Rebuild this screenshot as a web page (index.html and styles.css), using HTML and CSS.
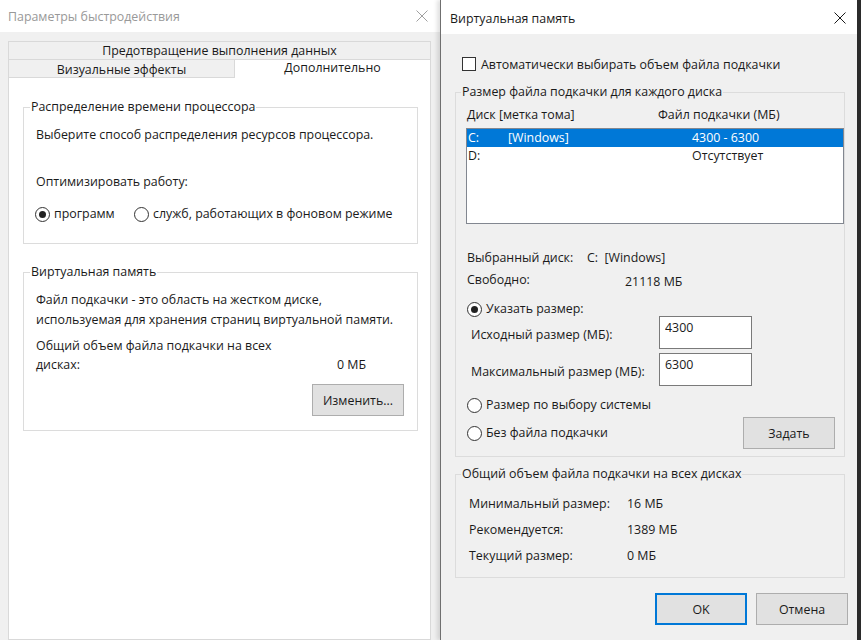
FILE: index.html
```html
<!DOCTYPE html>
<html lang="ru">
<head>
    <meta charset="UTF-8">
    <title>Параметры быстродействия</title>
    <link rel="stylesheet" href="styles.css">
</head>
<body>
    <div class="desk">
        <section class="win perf">
            <div class="titlebar">
                <span>Параметры быстродействия</span>
                <svg class="close" width="12" height="12" viewBox="0 0 12 12"><path d="M0.5 0.5L11.5 11.5M11.5 0.5L0.5 11.5" stroke="#a0a0a0" stroke-width="1"/></svg>
            </div>
            <div class="tabs">
                <div class="tab-row back">Предотвращение выполнения данных</div>
                <div class="tab-row front">
                    <div class="tab">Визуальные эффекты</div>
                    <div class="tab active">Дополнительно</div>
                </div>
            </div>
            <div class="tab-panel">
                <fieldset class="group cpu">
                    <legend>Распределение времени процессора</legend>
                    <p class="line">Выберите способ распределения ресурсов процессора.</p>
                    <p class="line optimize">Оптимизировать работу:</p>
                    <div class="radios">
                        <label class="radio first"><span class="dot on"></span>программ</label>
                        <label class="radio"><span class="dot"></span>служб, работающих в фоновом режиме</label>
                    </div>
                </fieldset>
                <fieldset class="group vmem">
                    <legend>Виртуальная память</legend>
                    <p class="line">Файл подкачки - это область на жестком диске,</p>
                    <p class="line">используемая для хранения страниц виртуальной памяти.</p>
                    <div class="total">
                        <span class="total-label">Общий объем файла подкачки на всех<br>дисках:</span>
                        <span>0 МБ</span>
                    </div>
                    <div class="btn-right">
                        <button class="btn">Изменить...</button>
                    </div>
                </fieldset>
            </div>
        </section>

        <section class="win vm">
            <div class="titlebar">
                <span>Виртуальная память</span>
                <svg class="close" width="12" height="12" viewBox="0 0 12 12"><path d="M0.5 0.5L11.5 11.5M11.5 0.5L0.5 11.5" stroke="#1a1a1a" stroke-width="1"/></svg>
            </div>
            <div class="vm-body">
                <label class="check"><span class="box"></span>Автоматически выбирать объем файла подкачки</label>

                <fieldset class="group disks">
                    <legend>Размер файла подкачки для каждого диска</legend>
                    <div class="list-head">
                        <span>Диск [метка тома]</span>
                        <span>Файл подкачки (МБ)</span>
                    </div>
                    <div class="listbox">
                        <div class="row selected"><span class="c-drive">C:</span><span class="c-label">[Windows]</span><span>4300 - 6300</span></div>
                        <div class="row"><span class="c-drive">D:</span><span class="c-label"></span><span>Отсутствует</span></div>
                    </div>
                    <div class="info sel">
                        <span class="info-label">Выбранный диск:</span>
                        <span>C:&nbsp;&nbsp;[Windows]</span>
                    </div>
                    <div class="info free">
                        <span class="info-label">Свободно:</span>
                        <span class="free-val">21118 МБ</span>
                    </div>
                    <label class="radio custom"><span class="dot on"></span>Указать размер:</label>
                    <div class="field">
                        <span class="field-label">Исходный размер (МБ):</span>
                        <input class="num" type="text" value="4300">
                    </div>
                    <div class="field second">
                        <span class="field-label">Максимальный размер (МБ):</span>
                        <input class="num" type="text" value="6300">
                    </div>
                    <label class="radio system"><span class="dot"></span>Размер по выбору системы</label>
                    <div class="last-row">
                        <label class="radio"><span class="dot"></span>Без файла подкачки</label>
                        <button class="btn">Задать</button>
                    </div>
                </fieldset>

                <fieldset class="group totals">
                    <legend>Общий объем файла подкачки на всех дисках</legend>
                    <div class="stat"><span class="stat-label">Минимальный размер:</span><span>16 МБ</span></div>
                    <div class="stat"><span class="stat-label">Рекомендуется:</span><span>1389 МБ</span></div>
                    <div class="stat"><span class="stat-label">Текущий размер:</span><span>0 МБ</span></div>
                </fieldset>

                <div class="dialog-buttons">
                    <button class="btn default">OK</button>
                    <button class="btn">Отмена</button>
                </div>
            </div>
        </section>
    </div>
</body>
</html>
```

FILE: styles.css
```css
body {
    margin: 0;
    background-color: #2b2b2b;
    font-family: "Open Sans", "Noto Sans", sans-serif;
    font-size: 12.4px;
    color: #1a1a1a;
}

.desk {
    display: flex;
    width: 861px;
    height: 640px;
    overflow: hidden;
    white-space: nowrap;
}

.win {
    display: flex;
    flex-direction: column;
    flex: none;
    height: 640px;
    background-color: #f0f0f0;
    box-sizing: border-box;
}

.perf {
    width: 440px;
}

.vm {
    width: 417px;
    border-left: 1px solid #6f6f6f;
    box-shadow: -3px 0 4px rgba(0, 0, 0, 0.12);
}

.titlebar {
    flex: none;
    height: 32px;
    display: flex;
    align-items: center;
    justify-content: space-between;
    padding: 0 12px 0 8px;
    background-color: #fff;
    color: #999;
}

.vm .titlebar {
    height: 34px;
    padding: 2px 11px 0 9px;
    box-sizing: border-box;
    color: #1a1a1a;
}

.close {
    display: block;
}

/* tabs */

.tabs {
    margin: 9px 0 0 8px;
    width: 423px;
}

.tab-row.back {
    height: 18px;
    box-sizing: border-box;
    border: 1px solid #d9d9d9;
    border-bottom: none;
    display: flex;
    align-items: center;
    justify-content: center;
    line-height: 16px;
}

.tab-row.front {
    display: flex;
    height: 19px;
}

.tab {
    box-sizing: border-box;
    border: 1px solid #d9d9d9;
    display: flex;
    align-items: center;
    justify-content: center;
    line-height: 16px;
}

.tab:first-child {
    width: 226px;
    border-right: none;
    padding-top: 2px;
}

.tab.active {
    flex: 1;
    border-bottom: none;
    background-color: #fff;
    padding-bottom: 2px;
}

.tab-panel {
    flex: 1;
    width: 423px;
    margin-left: 8px;
    box-sizing: border-box;
    background-color: #fff;
    border: 1px solid #d9d9d9;
    border-top: none;
    padding: 21px 12px 0 14px;
}

/* group boxes */

.group {
    margin: 0;
    border: 1px solid #dcdcdc;
    padding: 10px 13px 19px 12px;
    min-width: 0;
}

.group legend {
    padding: 0 1px;
    margin-left: -6px;
    line-height: 16px;
}

.line {
    margin: 0;
    line-height: 20px;
}

.optimize {
    margin-top: 27px;
}

.radios {
    display: flex;
    margin-top: 12px;
    height: 20px;
}

.radio {
    display: flex;
    align-items: center;
    gap: 4px;
    line-height: 20px;
}

.radio.first {
    width: 99px;
    margin-left: -1px;
}

.dot {
    width: 15px;
    height: 15px;
    box-sizing: border-box;
    border: 1px solid #333;
    border-radius: 50%;
    background-color: #fff;
    display: inline-flex;
    align-items: center;
    justify-content: center;
    flex: none;
}

.dot.on::after {
    content: "";
    width: 7px;
    height: 7px;
    border-radius: 50%;
    background-color: #222;
}

.vmem {
    margin-top: 20px;
    padding-bottom: 14px;
}

.total {
    display: flex;
    align-items: flex-end;
    margin-top: 6px;
    line-height: 19px;
}

.total-label {
    width: 301px;
}

.btn-right {
    display: flex;
    justify-content: flex-end;
    margin-top: 10px;
}

.btn {
    font-family: inherit;
    font-size: 12.4px;
    color: #1a1a1a;
    width: 92px;
    height: 32px;
    background-color: #e1e1e1;
    border: 1px solid #adadad;
    border-radius: 0;
    padding: 0;
}

/* virtual memory dialog */

.vm-body {
    padding: 20px 12px 0 14px;
}

.check {
    display: flex;
    align-items: center;
    gap: 5px;
    height: 20px;
    margin-left: 7px;
}

.box {
    width: 14px;
    height: 14px;
    box-sizing: border-box;
    border: 1px solid #333;
    background-color: #fff;
}

.disks {
    margin-top: 10px;
    padding: 5px 0 7px 10px;
}

.disks legend,
.totals legend {
    margin-left: -5px;
}

.list-head {
    display: flex;
    line-height: 20px;
    padding-left: 1px;
}

.list-head span:first-child {
    width: 191px;
}

.listbox {
    margin-top: 3px;
    height: 96px;
    box-sizing: border-box;
    border: 1px solid #828790;
    background-color: #fff;
}

.row {
    display: flex;
    height: 18px;
    line-height: 18px;
    padding-left: 1px;
}

.row.selected {
    background-color: #0078d7;
    color: #fff;
}

.c-drive {
    width: 40px;
}

.c-label {
    width: 184px;
}

.info {
    display: flex;
    line-height: 20px;
    padding-left: 1px;
}

.info.sel {
    margin-top: 24px;
}

.info.sel .info-label {
    width: 120px;
}

.info.free {
    margin-top: 2px;
}

.info.free .info-label {
    width: 158px;
}

.free-val {
    padding-top: 2px;
    margin-bottom: -2px;
}

.radio.custom {
    margin-top: 11px;
    line-height: 16px;
    height: 16px;
    margin-left: 1px;
}

.field {
    display: flex;
    align-items: flex-start;
    margin-top: -1px;
    height: 33px;
}

.field.second {
    margin-top: 4px;
}

.field-label {
    width: 188px;
    padding-left: 5px;
    padding-top: 9px;
    line-height: 20px;
}

.num {
    width: 93px;
    height: 33px;
    box-sizing: border-box;
    border: 1px solid #7a7a7a;
    padding: 3px 4px 13px 5px;
    font-family: inherit;
    font-size: 12.4px;
    color: #1a1a1a;
    background-color: #fff;
    margin: 0;
    outline: none;
}

.radio.system {
    margin-top: 9px;
    margin-left: 1px;
}

.last-row {
    display: flex;
    align-items: center;
    justify-content: space-between;
    margin-top: 2px;
    padding-left: 1px;
    padding-right: 9px;
}

.totals {
    margin-top: 9px;
    padding: 8px 0 9px 13px;
}

.totals legend {
    margin-left: -8px;
}

.stat {
    display: flex;
    height: 26px;
    align-items: center;
}

.stat-label {
    width: 158px;
}

.dialog-buttons {
    display: flex;
    justify-content: flex-end;
    gap: 9px;
    margin-top: 15px;
    margin-right: -3px;
}

.btn.default {
    border: 2px solid #0078d7;
}
```
